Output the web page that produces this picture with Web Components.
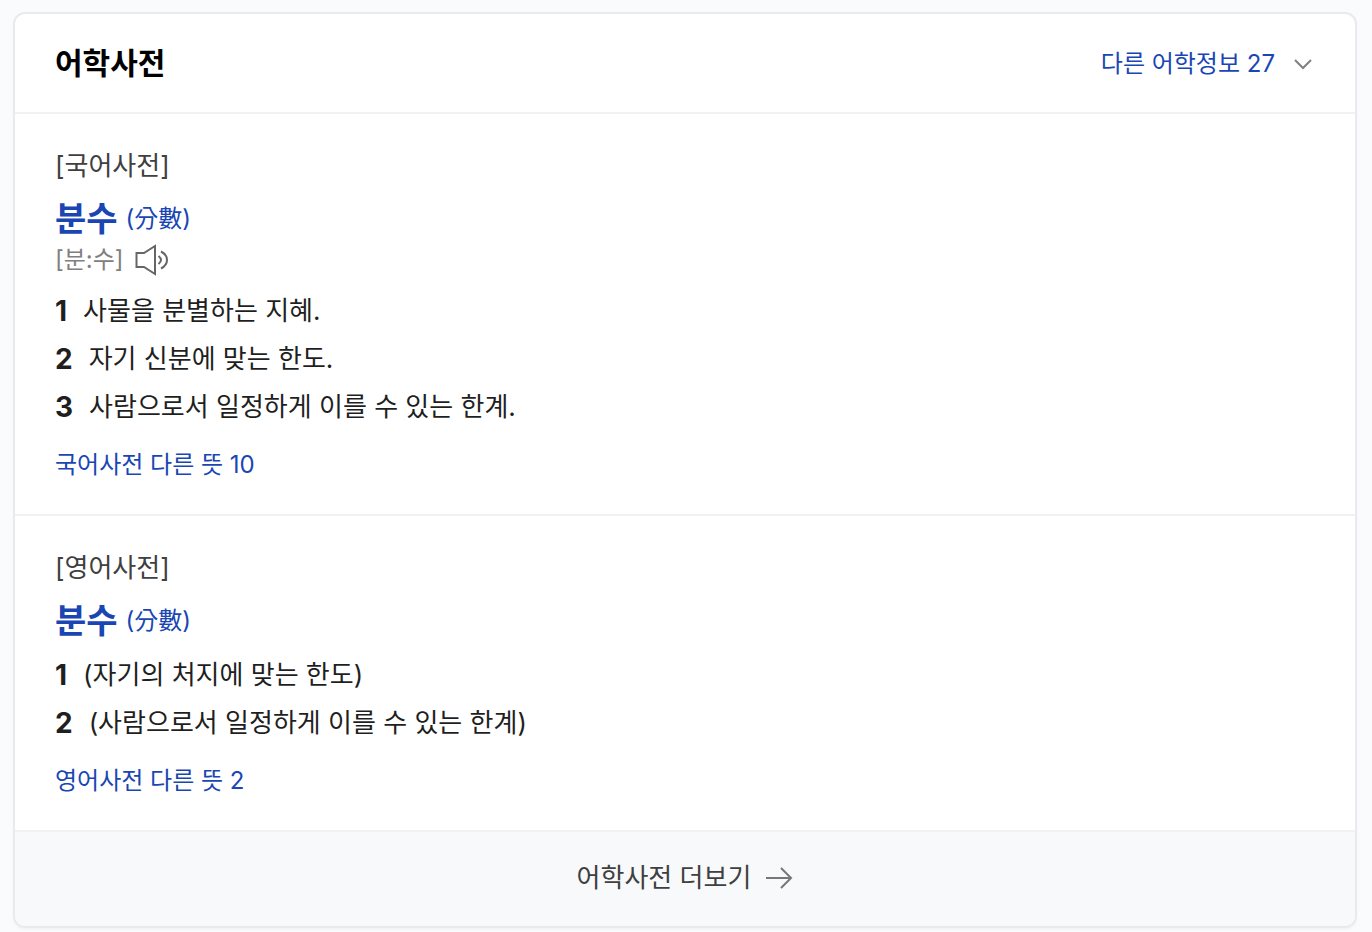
<!DOCTYPE html>
<html lang="ko">
<head>
<meta charset="utf-8">
<meta name="viewport" content="width=device-width, initial-scale=1">
<title>어학사전</title>
<style>
  body {
    margin: 0;
    padding: 12px 15px 4px 13px;
    background: #fafbfd;
    color: #1f1f1f;
    font-family: Inter, "Noto Sans CJK KR", sans-serif;
    font-size: 26px;
    line-height: 48px;
  }
</style>
</head>
<body>
<dict-card>
  <dict-header slot="header" more="다른 어학정보 27">어학사전</dict-header>
  <dict-entry source="[국어사전]" word="분수" hanja="(分數)" sound="[분:수]" more="국어사전 다른 뜻 10">
    <dict-sense number="1">사물을 분별하는 지혜.</dict-sense>
    <dict-sense number="2">자기 신분에 맞는 한도.</dict-sense>
    <dict-sense number="3">사람으로서 일정하게 이를 수 있는 한계.</dict-sense>
  </dict-entry>
  <dict-entry source="[영어사전]" word="분수" hanja="(分數)" more="영어사전 다른 뜻 2">
    <dict-sense number="1">(자기의 처지에 맞는 한도)</dict-sense>
    <dict-sense number="2">(사람으로서 일정하게 이를 수 있는 한계)</dict-sense>
  </dict-entry>
  <dict-more slot="footer">어학사전 더보기</dict-more>
</dict-card>
<script>
  class BaseElement extends HTMLElement {
    connectedCallback() {
      if (!this.shadowRoot) {
        this.attachShadow({ mode: "open" }).innerHTML = this.render();
      }
    }
    attr(name) { return this.getAttribute(name) || ""; }
  }

  customElements.define("dict-card", class extends BaseElement {
    render() {
      return `<style>
        :host { display: block; }
        section { border: 2px solid #e9eaed; border-radius: 12px; background: #fff; overflow: hidden; box-shadow: 0 2px 2px #f3f4f6; }
      </style>
      <section><slot name="header"></slot><slot></slot><slot name="footer"></slot></section>`;
    }
  });

  customElements.define("dict-header", class extends BaseElement {
    render() {
      return `<style>
        :host { display: flex; align-items: center; justify-content: space-between; height: 98px; padding: 0 40px; border-bottom: 2px solid #f1f1f2; }
        h2 { margin: 0; font-size: 30px; font-weight: 700; color: #000; }
        button { display: flex; align-items: center; gap: 16px; padding: 2px 0 0; border: 0; background: none; font: inherit; font-size: 24px; color: #1a46b4; cursor: pointer; }
        svg { display: block; }
      </style>
      <h2><slot></slot></h2>
      <button type="button"><span>${this.attr("more")}</span>
        <svg width="24" height="24" viewBox="0 0 24 24" fill="none" stroke="#808080" stroke-width="2" aria-hidden="true"><path d="M4 8l8 8 8-8"/></svg>
      </button>`;
    }
  });

  customElements.define("dict-entry", class extends BaseElement {
    render() {
      const sound = this.attr("sound");
      return `<style>
        :host { display: block; padding: 32px 40px 25px; border-bottom: 2px solid #f1f1f2; }
        p, h3 { margin: 0; }
        .source { height: 40px; line-height: 40px; color: #404040; }
        h3 { display: flex; align-items: center; gap: 8px; height: 46px; margin-top: 10px; font-weight: 400; }
        a { color: #1a46b4; text-decoration: none; }
        .word { font-size: 34px; font-weight: 700; }
        .hanja, .more { font-size: 24px; }
        .more { display: block; width: fit-content; height: 48px; }
        .sound { display: flex; align-items: center; gap: 8px; height: 36px; font-size: 24px; line-height: 36px; color: #808080; }
        button { display: block; padding: 0; border: 0; background: none; cursor: pointer; }
        svg { display: block; }
        .senses { padding: 7px 0 10px; }
        .senses.after-sound { padding-top: 9px; }
      </style>
      <p class="source">${this.attr("source")}</p>
      <h3><a class="word" href="#entry">${this.attr("word")}</a><a class="hanja" href="#entry">${this.attr("hanja")}</a></h3>
      ${sound ? `<div class="sound"><span>${sound}</span>
        <button type="button" aria-label="발음 듣기"><svg width="38" height="36" viewBox="0 0 38 36" fill="none" stroke="#666" stroke-width="2"><path d="M4.500 11h7.500L23 4v28L12 25H4.500z"/><path d="M26.500 14q5 4 0 8M29 9.500c8 4 8 13 0 17"/></svg></button>
      </div>` : ""}
      <div class="senses${sound ? " after-sound" : ""}" role="list"><slot></slot></div>
      <a class="more" href="#more">${this.attr("more")}</a>`;
    }
  });

  customElements.define("dict-sense", class extends BaseElement {
    connectedCallback() {
      super.connectedCallback();
      this.setAttribute("role", "listitem");
    }
    render() {
      return `<style>
        :host { display: flex; gap: 16px; height: 48px; line-height: 48px; }
        b { font-size: 28px; font-weight: 700; }
      </style>
      <b>${this.attr("number")}</b><span><slot></slot></span>`;
    }
  });

  customElements.define("dict-more", class extends BaseElement {
    render() {
      return `<style>
        :host { display: block; background: #f8f9fb; }
        a { display: flex; align-items: center; justify-content: center; gap: 14px; height: 92px; padding-bottom: 2px; color: #404040; text-decoration: none; }
        svg { display: block; }
      </style>
      <a href="#all"><span><slot></slot></span>
        <svg width="28" height="24" viewBox="0 0 28 24" fill="none" stroke="#777" stroke-width="2" aria-hidden="true"><path d="M1 12h25M16 2l10 10-10 10"/></svg>
      </a>`;
    }
  });
</script>
</body>
</html>
